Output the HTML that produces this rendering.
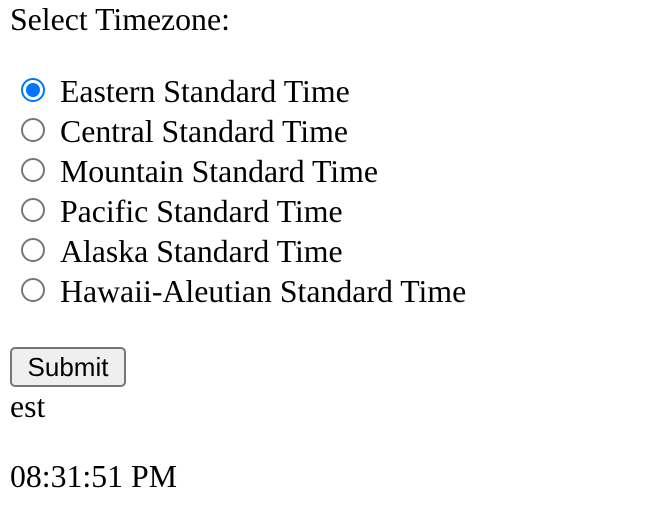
<!DOCTYPE html>
<html><head><style>
body{margin:0;background:#fff;font-family:"Liberation Serif",serif;font-size:31.8px;color:#000;}
.t{position:absolute;left:10px;height:40px;line-height:40px;white-space:nowrap;}
.r{position:absolute;left:21px;width:20px;height:20px;border:2px solid #767676;border-radius:50%;box-sizing:content-box;}
.r.on{border-color:#0075ff;}
.r.on::after{content:"";position:absolute;left:3px;top:3px;width:14px;height:14px;border-radius:50%;background:#0075ff;}
.l{position:absolute;left:60px;height:40px;line-height:40px;white-space:nowrap;}
button{position:absolute;left:10px;top:347px;width:116px;height:40px;font-family:"Liberation Sans",sans-serif;font-size:26px;background:#efefef;border:2px solid #767676;border-radius:5px;padding:0;color:#000;}
</style></head><body>
<div class="t" style="top:0">Select Timezone:</div>
<div class="r on" style="top:78px"></div><div class="l" style="top:72px">Eastern Standard Time</div>
<div class="r" style="top:118px"></div><div class="l" style="top:112px">Central Standard Time</div>
<div class="r" style="top:158px"></div><div class="l" style="top:152px">Mountain Standard Time</div>
<div class="r" style="top:198px"></div><div class="l" style="top:192px">Pacific Standard Time</div>
<div class="r" style="top:238px"></div><div class="l" style="top:232px">Alaska Standard Time</div>
<div class="r" style="top:278px"></div><div class="l" style="top:272px">Hawaii-Aleutian Standard Time</div>
<button>Submit</button>
<div class="t" style="top:387px">est</div>
<div class="t" style="top:457px">08:31:51 PM</div>
</body></html>
